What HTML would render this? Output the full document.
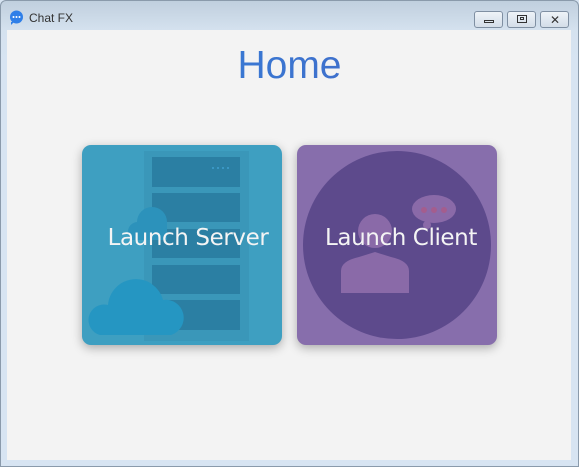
<!DOCTYPE html>
<html><head><style>
*{margin:0;padding:0;box-sizing:border-box}
body{width:579px;height:467px;overflow:hidden;background:#d7e4f2;font-family:"Liberation Sans",sans-serif;position:relative}
.frame{position:absolute;left:0;top:0;width:579px;height:467px;border:1px solid #8a9aab;border-radius:6px 6px 0 0;background:linear-gradient(#c0cfde 0,#d5e2ef 30px,#d7e4f2 60px)}
.title{position:absolute;left:29px;top:11px;font-size:12px;color:#333}
.btn{position:absolute;top:11px;width:29px;height:17px;border:1px solid #7f8fa2;border-radius:3px;background:linear-gradient(#eef3f8,#d3dde8)}
.content{position:absolute;left:7px;top:30px;width:564px;height:430px;background:#f3f3f3}
.home{position:absolute;left:0;width:579px;top:46px;line-height:39px;text-align:center;font-size:39px;background:linear-gradient(90deg,#2c88e2,#4b60bd);-webkit-background-clip:text;color:transparent;font-family:"Liberation Sans",sans-serif}
.card{position:absolute;top:145px;width:200px;height:200px;border-radius:9px;overflow:hidden;box-shadow:0 3px 10px rgba(0,0,0,.3)}
.lbl{position:absolute;left:0;width:200px;top:80px;text-align:center;font-size:23px;color:#f4f4f4;font-family:"DejaVu Sans","Liberation Sans",sans-serif;letter-spacing:-0.4px;white-space:nowrap}
</style></head><body>
<div class="frame"></div>
<svg style="position:absolute;left:9px;top:10px" width="15" height="15"><circle cx="7.5" cy="7" r="6.5" fill="#2f7fe8"/><path d="M2 12 L2 15 L5 12Z" fill="#2f7fe8"/><circle cx="4.5" cy="7" r="1" fill="#fff"/><circle cx="7.5" cy="7" r="1" fill="#fff"/><circle cx="10.5" cy="7" r="1" fill="#fff"/></svg>
<div class="title">Chat FX</div>
<div class="btn" style="left:474px"><div style="position:absolute;left:9px;top:8px;width:10px;height:3px;border:1px solid #333"></div></div>
<div class="btn" style="left:507px"><div style="position:absolute;left:9px;top:3px;width:10px;height:8px;border:1px solid #333"><div style="margin:1px 2px;width:4px;height:3px;border:1px solid #333"></div></div></div>
<div class="btn" style="left:540px"><div style="position:absolute;left:9px;top:1px;font-size:12px;color:#333">✕</div></div>
<div class="content"></div>
<div class="home">Home</div>
<div class="card" style="left:82px;background:#3e9fc1">
<svg width="200" height="200">
<rect x="62" y="6" width="105" height="190" fill="#3a97b9"/>
<g fill="#2b7fa3">
<rect x="70" y="12" width="88" height="30"/><rect x="70" y="48" width="88" height="29"/><rect x="70" y="84" width="88" height="29"/><rect x="70" y="120" width="88" height="29"/><rect x="70" y="155" width="88" height="30"/>
</g>
<g fill="#3a97c4"><rect x="130" y="22" width="2" height="2"/><rect x="135" y="22" width="2" height="2"/><rect x="140" y="22" width="2" height="2"/><rect x="145" y="22" width="2" height="2"/></g>
<path d="M18 190 a14 14 0 0 1 8-30 a28 28 0 0 1 55-5 a18 18 0 0 1 8 35 Z" fill="#2596c2"/>
<path d="M50 95 a10 10 0 0 1 5-18 a15 15 0 0 1 30 0 v18Z" fill="#2c92bb"/>
</svg>
<div class="lbl" style="left:6px">Launch Server</div></div>
<div class="card" style="left:297px;background:#876eac">
<svg width="200" height="200">
<circle cx="100" cy="100" r="94" fill="#5d4a8c"/>
<circle cx="78" cy="86" r="17" fill="#8a6aa8"/>
<path d="M44 148 v-22 q0-10 18-14 l16-5 l16 5 q18 4 18 14 v22Z" fill="#8a6aa8"/>
<ellipse cx="137" cy="64" rx="22" ry="14" fill="#8a6aa8"/>
<circle cx="130" cy="80" r="4" fill="#8a6aa8"/>
<circle cx="127" cy="65" r="3" fill="#a45d8e"/><circle cx="137" cy="65" r="3" fill="#a45d8e"/><circle cx="147" cy="65" r="3" fill="#a45d8e"/>
</svg>
<div class="lbl" style="left:4px">Launch Client</div></div>
</body></html>
